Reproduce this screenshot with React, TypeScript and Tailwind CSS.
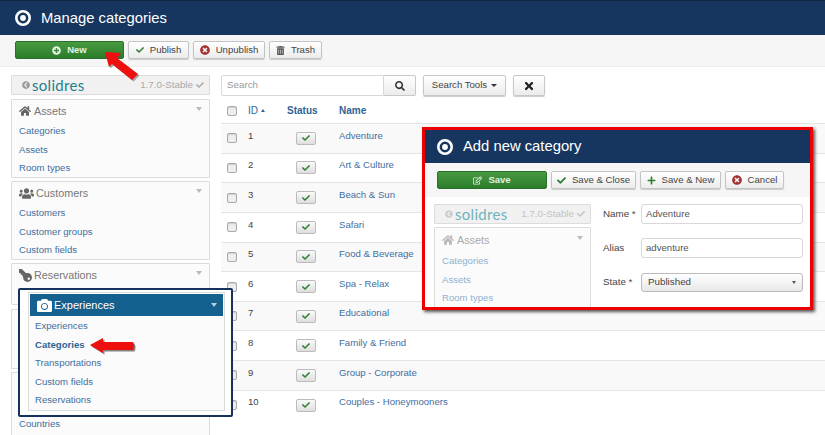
import { ReactNode } from 'react'
import {
  FaCamera,
  FaCheck,
  FaChevronCircleLeft,
  FaHome,
  FaKey,
  FaPlus,
  FaPlusCircle,
  FaRegEdit,
  FaSearch,
  FaTimes,
  FaTimesCircle,
  FaTrashAlt,
  FaUsers,
} from 'react-icons/fa'

const rows = [
  'Adventure',
  'Art & Culture',
  'Beach & Sun',
  'Safari',
  'Food & Beverage',
  'Spa - Relax',
  'Educational',
  'Family & Friend',
  'Group - Corporate',
  'Couples - Honeymooners',
]

function Target({ size }: { size: number }) {
  return (
    <svg width={size} height={size} viewBox="0 0 16 16" className="shrink-0">
      <circle cx="8" cy="8" r="6.7" fill="none" stroke="white" strokeWidth="2.6" />
      <circle cx="8" cy="8" r="2.9" fill="white" />
    </svg>
  )
}

function GreenButton({ width, icon, label }: { width: string; icon: ReactNode; label: string }) {
  return (
    <div
      className={`flex h-[18px] items-center justify-center gap-[6px] rounded-[2px] border border-[#2a6f2a] bg-gradient-to-b from-[#479a3f] to-[#2b7d2c] text-[9.5px] font-bold text-[#e6f2e4] ${width}`}
    >
      {icon}
      {label}
    </div>
  )
}

function Button({ width, icon, label }: { width: string; icon: ReactNode; label: string }) {
  return (
    <div
      className={`flex h-[18px] items-center justify-center gap-[6px] rounded-[2px] border border-[#c4c4c4] bg-gradient-to-b from-white to-[#ececec] text-[9.6px] text-[#444] shadow-[0_1px_1px_#ccc] ${width}`}
    >
      {icon}
      {label}
    </div>
  )
}

function Logo({ faded }: { faded?: boolean }) {
  return (
    <div className="flex h-[20px] items-center justify-between rounded-[1px] border border-[#dcdcdc] bg-[#f1f1f1] pl-[10px] pr-[5px]">
      <div className="flex items-center gap-[2px]">
        <FaChevronCircleLeft className={faded ? 'text-[8px] text-[#ccc]' : 'text-[8px] text-[#999]'} />
        <span
          className={`font-['Lato'] text-[15px] leading-none tracking-[0.3px] ${faded ? 'text-[#6fb3bb]' : 'text-[#1f7f8f]'}`}
        >
          solidres
        </span>
      </div>
      <div className={`flex items-center gap-[3px] text-[9.8px] ${faded ? 'text-[#c4c4c4]' : 'text-[#aaa]'}`}>
        1.7.0-Stable
        <FaCheck className="text-[8px]" />
      </div>
    </div>
  )
}

function Panel({
  icon,
  title,
  links,
  className,
  faded,
}: {
  icon: ReactNode
  title: string
  links: string[]
  className?: string
  faded?: boolean
}) {
  return (
    <div className={`rounded-[1px] border border-[#dcdcdc] bg-[#fbfbfb] px-[7px] ${className ?? ''}`}>
      <div
        className={`flex items-center justify-between text-[10.8px] ${
          faded ? 'h-[24px] text-[#aaa]' : 'h-[22px] text-[#777]'
        }`}
      >
        <span className="flex items-center gap-[2px]">
          {icon}
          {title}
        </span>
        <span className="mb-[4px] h-0 w-0 border-x-[3.5px] border-t-[4px] border-x-transparent border-t-[#bbb]" />
      </div>
      {links.map((link) => (
        <div
          key={link}
          className={`flex h-[18.5px] items-center text-[9.6px] ${faded ? 'text-[#8fb2d2]' : 'text-[#3f6f9f]'}`}
        >
          {link}
        </div>
      ))}
    </div>
  )
}

function Checkbox() {
  return <span className="block h-[10px] w-[10px] rounded-[2px] border border-[#aaa] bg-[#eee] shadow-[inset_0_1px_1px_#ccc]" />
}

function FormRow({ label, children }: { label: string; children: ReactNode }) {
  return (
    <div className="flex h-[20px] items-center">
      <span className="w-[38px] text-[9.8px] text-[#444]">{label}</span>
      {children}
    </div>
  )
}

function TextInput({ value }: { value: string }) {
  return (
    <div className="flex h-[20px] w-[162px] items-center rounded-[3px] border border-[#d8d8d8] bg-white pl-[4px] text-[9.6px] text-[#555]">
      {value}
    </div>
  )
}

export default function App() {
  return (
    <div className="relative h-[435px] w-[825px] overflow-hidden bg-white font-['Liberation_Sans',Arial,sans-serif]">
      {/* Header */}
      <div className="flex h-[35px] items-center gap-[10px] border-t border-[#0e2747] bg-[#17365f] pl-[15px] text-white">
        <Target size={16} />
        <span className="text-[14.8px]">Manage categories</span>
      </div>

      {/* Toolbar */}
      <div className="flex h-[32px] items-start gap-[4px] border-b border-[#ececec] bg-[#f6f6f6] pl-[15px] pt-[6px]">
        <GreenButton width="w-[109px]" icon={<FaPlusCircle className="text-[9px]" />} label="New" />
        <Button width="w-[61px]" icon={<FaCheck className="text-[8px] text-[#2f7d32]" />} label="Publish" />
        <Button width="w-[72px]" icon={<FaTimesCircle className="text-[10px] text-[#a33030]" />} label="Unpublish" />
        <Button width="w-[53px]" icon={<FaTrashAlt className="text-[9px] text-[#555]" />} label="Trash" />
      </div>

      <div className="flex items-start gap-[11px] pl-[11px] pt-[8px]">
        {/* Sidebar */}
        <div className="flex w-[199px] shrink-0 flex-col gap-[3px]">
          <div className="mb-[1px]">
            <Logo />
          </div>
          <Panel
            icon={<FaHome className="mr-[1px] text-[12px] text-[#666]" />}
            title="Assets"
            links={['Categories', 'Assets', 'Room types']}
            className="h-[79px]"
          />
          <Panel
            icon={<FaUsers className="text-[15px] text-[#666]" />}
            title="Customers"
            links={['Customers', 'Customer groups', 'Custom fields']}
            className="h-[79px]"
          />
          <Panel
            icon={<FaKey className="rotate-90 text-[13px] text-[#666]" />}
            title="Reservations"
            links={[]}
            className="h-[42px]"
          />
          {/* these two sit behind the callout, only their frames and last link show */}
          <div className="mt-px h-[60px] border border-[#dcdcdc] bg-[#fbfbfb]" />
          <div className="flex h-[80px] flex-col border border-[#dcdcdc] bg-[#fbfbfb] pl-[7px] pt-[44px] text-[9.6px] text-[#3f6f9f]">
            Countries
          </div>
        </div>

        {/* Content */}
        <div className="flex-1">
          <div className="flex items-center">
            <div className="flex h-[21px] w-[163px] items-center rounded-l-[2px] border border-[#d8d8d8] bg-white pl-[5px] text-[9.8px] text-[#999]">
              Search
            </div>
            <div className="flex h-[21px] w-[32px] items-center justify-center rounded-r-[2px] border border-l-0 border-[#c8c8c8] bg-gradient-to-b from-white to-[#ececec]">
              <FaSearch className="text-[10px] text-[#333]" />
            </div>
            <div className="ml-[7px] flex h-[21px] w-[83px] items-center justify-center gap-[4px] rounded-[2px] border border-[#c8c8c8] bg-gradient-to-b from-white to-[#ececec] text-[9.6px] text-[#444] shadow-[0_1px_1px_#ccc]">
              Search Tools
              <span className="h-0 w-0 border-x-[3px] border-t-[3px] border-x-transparent border-t-[#333]" />
            </div>
            <div className="ml-[7px] flex h-[21px] w-[32px] items-center justify-center rounded-[2px] border border-[#c8c8c8] bg-gradient-to-b from-white to-[#ececec] shadow-[0_1px_1px_#ccc]">
              <FaTimes className="text-[12px] text-[#222]" />
            </div>
          </div>

          <div className="mt-[2px] grid h-[25px] grid-cols-[27px_39px_52px_1fr] items-center text-[10px] font-bold text-[#2f6496]">
            <span className="pl-[6px]">
              <Checkbox />
            </span>
            <span className="flex items-center gap-[3px] font-normal">
              ID
              <span className="mb-[1px] h-0 w-0 border-x-[2.5px] border-b-[3px] border-x-transparent border-b-[#2f6496]" />
            </span>
            <span>Status</span>
            <span>Name</span>
          </div>

          {rows.map((name, i) => (
            <div
              key={name}
              className={`grid h-[29.65px] grid-cols-[27px_39px_52px_1fr] items-center border-t border-[#e4e4e4] text-[9.6px] ${
                i % 2 === 0 ? 'bg-[#f9f9f9]' : 'bg-white'
              }`}
            >
              <span className="pl-[6px]">
                <Checkbox />
              </span>
              <span className="pb-[5px] text-[#444]">{i + 1}</span>
              <span className="pl-[9px]">
                <span className="flex h-[13px] w-[20px] items-center justify-center rounded-[2px] border border-[#bbb] bg-gradient-to-b from-[#fafafa] to-[#dedede]">
                  <FaCheck className="text-[8px] text-[#2f7d32]" />
                </span>
              </span>
              <span className="pb-[5px] text-[#3f6f9f]">{name}</span>
            </div>
          ))}
        </div>
      </div>

      {/* Experiences callout */}
      <div className="absolute left-[18px] top-[288px] h-[129px] w-[215px] rounded-[2px] border-2 border-[#17315f] bg-white pl-[8px] pr-[6px] pt-[2px]">
        <div className="h-[119px] border border-[#dcdcdc] bg-[#fbfbfb] p-px">
          <div className="flex h-[22px] items-center justify-between bg-[#14608f] pl-[7px] pr-[6px] text-[11px] text-white">
            <span className="flex items-center gap-[2px]">
              <FaCamera className="text-[15px]" />
              Experiences
            </span>
            <span className="h-0 w-0 border-x-[3.5px] border-t-[4px] border-x-transparent border-t-[#b8cfe0]" />
          </div>
          <div className="pl-[5px] pt-[1px] text-[9.6px] text-[#3f6f9f]">
            <div className="flex h-[18.5px] items-center">Experiences</div>
            <div className="flex h-[18.5px] items-center font-bold text-[#2f6496]">Categories</div>
            <div className="flex h-[18.5px] items-center">Transportations</div>
            <div className="flex h-[18.5px] items-center">Custom fields</div>
            <div className="flex h-[18.5px] items-center">Reservations</div>
          </div>
        </div>
      </div>

      {/* Add new category callout */}
      <div className="absolute left-[422px] top-[127px] h-[183px] w-[391px] overflow-hidden border-[3px] border-[#ee0000] bg-white shadow-[2px_2px_3px_#555]">
        <div className="flex h-[33px] items-center gap-[10px] bg-[#17365f] pl-[12px] text-white">
          <Target size={16} />
          <span className="text-[14.8px]">Add new category</span>
        </div>
        <div className="flex h-[34px] items-center gap-[4px] bg-[#f6f6f6] pl-[12px]">
          <GreenButton width="w-[110px]" icon={<FaRegEdit className="text-[9px]" />} label="Save" />
          <Button width="w-[85px]" icon={<FaCheck className="text-[9px] text-[#2f7d32]" />} label="Save & Close" />
          <Button width="w-[81px]" icon={<FaPlus className="text-[9px] text-[#2f7d32]" />} label="Save & New" />
          <Button width="w-[59px]" icon={<FaTimesCircle className="text-[10px] text-[#a33030]" />} label="Cancel" />
        </div>
        <div className="flex gap-[12px] pl-[9px] pt-[7px]">
          <div className="flex w-[157px] shrink-0 flex-col gap-[3px]">
            <Logo faded />
            <Panel
              faded
              icon={<FaHome className="mr-[1px] text-[12px] text-[#bbb]" />}
              title="Assets"
              links={['Categories', 'Assets', 'Room types']}
              className="h-[90px]"
            />
          </div>
          <div className="flex flex-col gap-[14px]">
            <FormRow label="Name *">
              <TextInput value="Adventure" />
            </FormRow>
            <FormRow label="Alias">
              <TextInput value="adventure" />
            </FormRow>
            <FormRow label="State *">
              <div className="flex h-[19px] w-[162px] items-center justify-between rounded-[3px] border border-[#bbb] bg-gradient-to-b from-white to-[#e8e8e8] px-[6px] text-[9.8px] text-[#444]">
                Published
                <span className="h-0 w-0 border-x-[2.5px] border-t-[3px] border-x-transparent border-t-[#555]" />
              </div>
            </FormRow>
          </div>
        </div>
      </div>

      {/* Red arrows */}
      <svg className="absolute left-[100px] top-[46px]" width="44" height="38" viewBox="0 0 44 38">
        <path d="M5 6 L21 7 L17 12 L38 28 L32 34 L12 18 L9 21 Z" fill="#555" opacity="0.5" transform="translate(1.5 1.5)" />
        <path d="M5 6 L21 7 L17 12 L38 28 L32 34 L12 18 L9 21 Z" fill="#ee0f0f" />
      </svg>
      <svg className="absolute left-[86px] top-[334px]" width="52" height="22" viewBox="0 0 52 22">
        <path d="M4 11 L17 4 L17 8 L47 8 Q49 12 47 16 L17 16 L17 19 Z" fill="#333" opacity="0.6" transform="translate(1.5 1.5)" />
        <path d="M4 11 L17 4 L17 8 L47 8 Q49 12 47 16 L17 16 L17 19 Z" fill="#ee0f0f" />
      </svg>
    </div>
  )
}
